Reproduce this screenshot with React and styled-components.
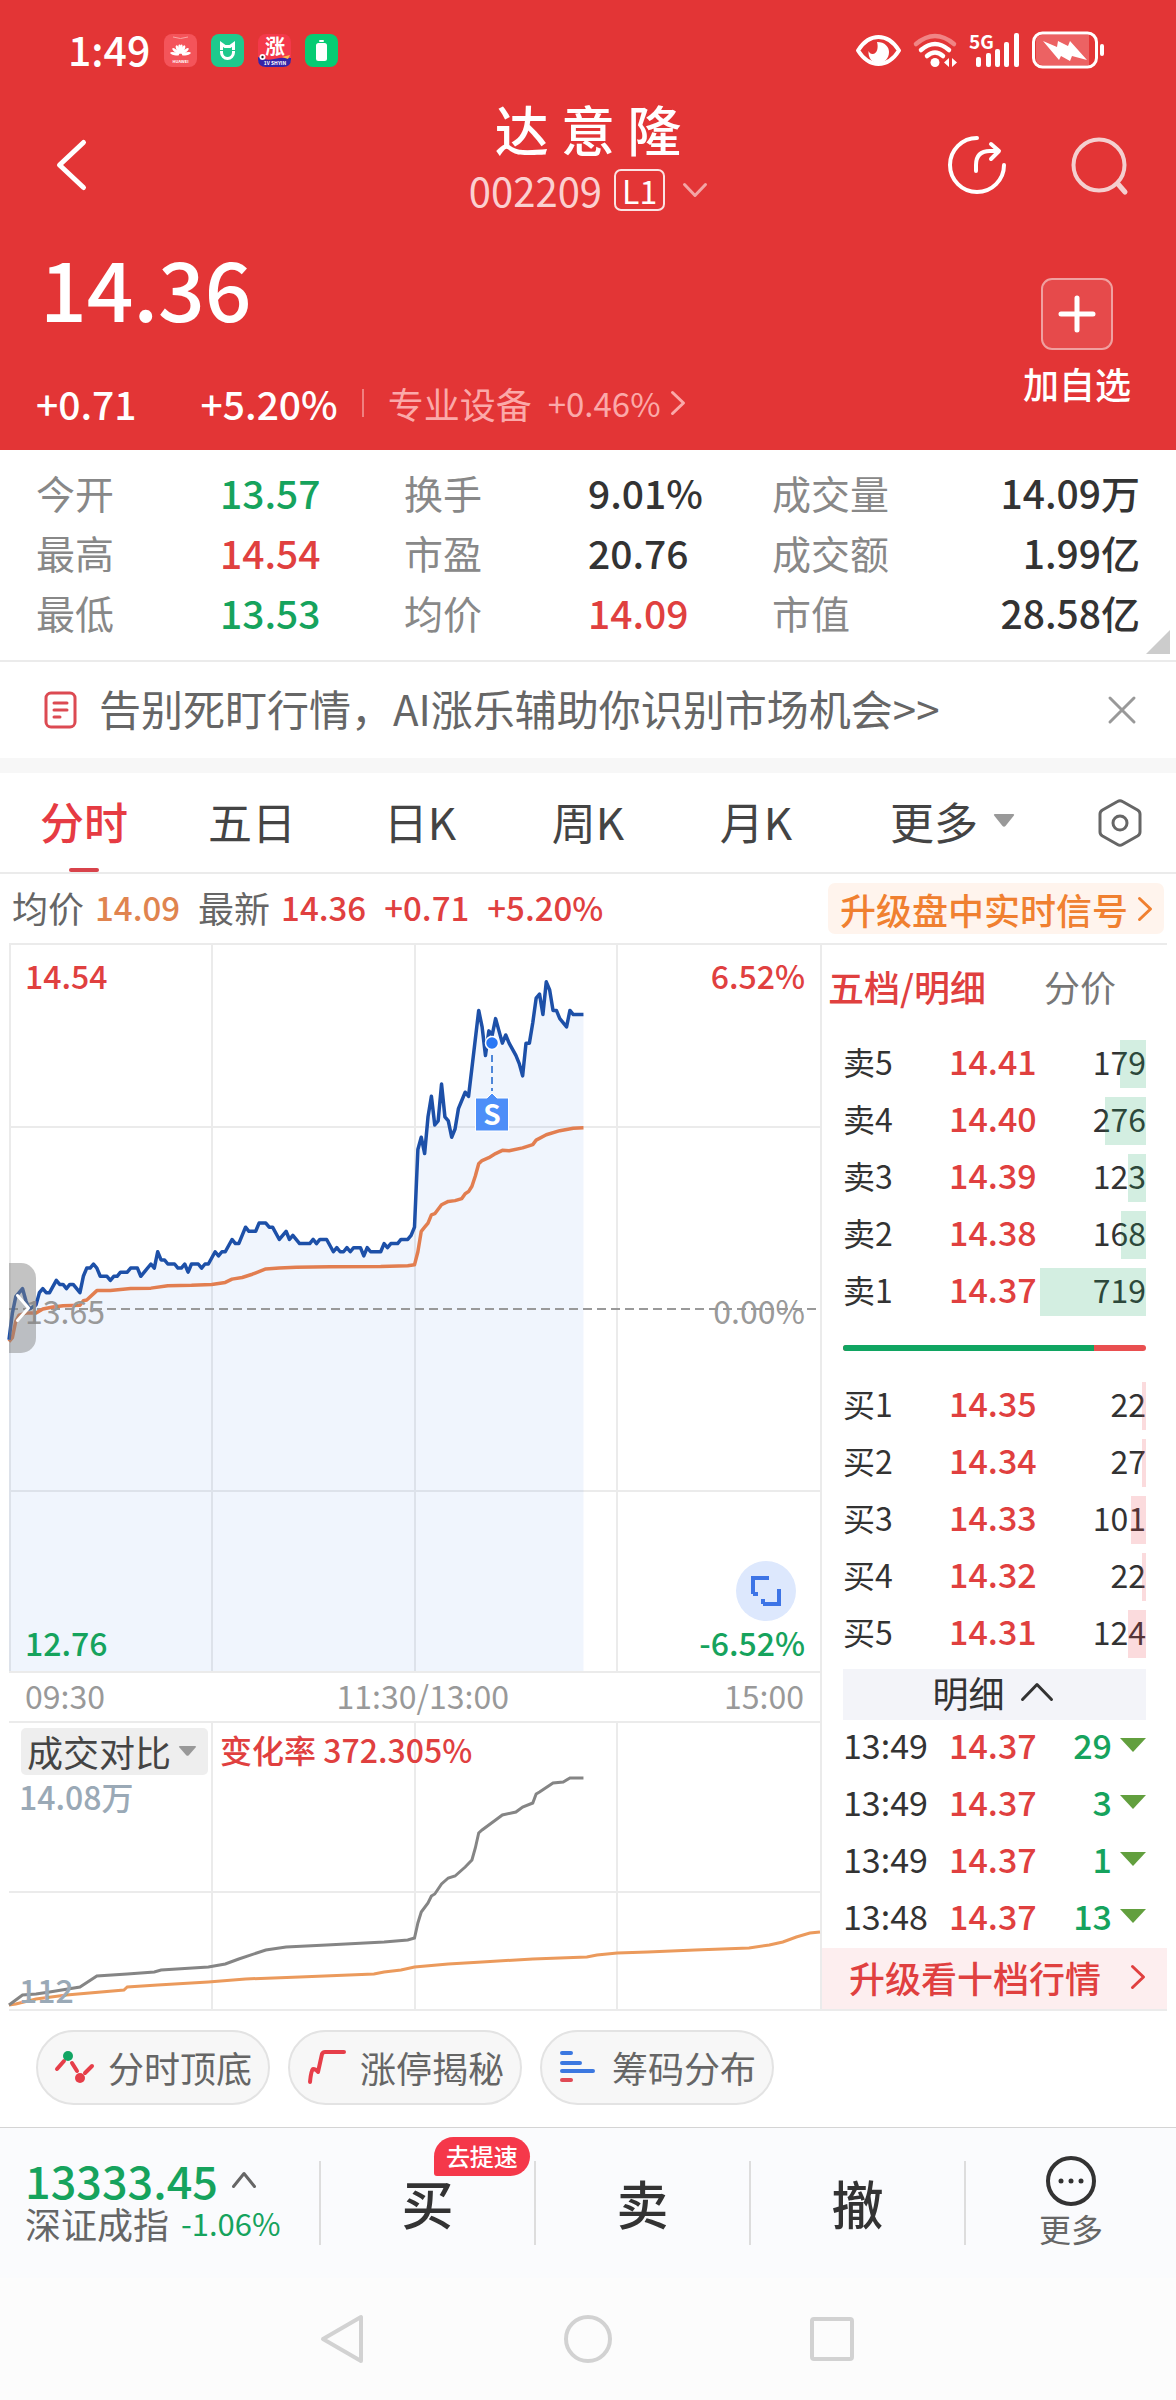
import React from 'react'
import styled, { createGlobalStyle } from 'styled-components'

const red = '#e33536'
const up = '#e0403f'
const down = '#16a35d'
const ink = '#333'
const grey = '#666'
const line = '#ebebeb'

const GlobalStyle = createGlobalStyle`
  * {
    box-sizing: border-box;
  }

  body {
    margin: 0;
    background: #fff;
    color: ${ink};
    font-family: 'Noto Sans CJK SC', 'Noto Sans', sans-serif;
    font-size: 36px;
    line-height: 48px;
  }

  h1, dl, dd, p {
    margin: 0;
  }

  button, select {
    margin: 0;
    padding: 0;
    border: 0;
    background: none;
    color: inherit;
    font: inherit;
  }

  svg {
    display: block;
    flex: none;
    overflow: visible;
  }
`

const Page = styled.div`
  display: flex;
  flex-direction: column;
  min-height: 100vh;
`

/* header */

const Header = styled.header`
  background: ${red};
  color: #fff;
`

const StatusBar = styled.div`
  display: flex;
  align-items: center;
  justify-content: space-between;
  height: 100px;
  padding: 0 71px 0 68px;
`

const StatusGroup = styled.div`
  display: flex;
  align-items: center;
  gap: ${p => p.$gap}px;
`

const Clock = styled.span`
  padding-bottom: 4px;
  font-size: 41px;
  font-weight: 500;
`

const TitleBar = styled.div`
  display: grid;
  grid-template-columns: 1fr auto 1fr;
  align-items: center;
  height: 130px;
  padding: 0 48px;
`

const IconButton = styled.button`
  display: flex;
  align-items: center;
  justify-content: center;
`

const BackSlot = styled.div`
  padding-left: 9px;
`

const Title = styled.div`
  align-self: start;
  text-align: center;
`

const Name = styled.h1`
  font-size: 54px;
  font-weight: 500;
  line-height: 58px;
`

const CodeButton = styled.button`
  display: flex;
  align-items: center;
  height: 64px;
  margin: 0 auto;
  color: #fbd0d0;
  font-size: 40px;
`

const Level = styled.span`
  margin: 0 18px 0 12px;
  padding: 0 6px;
  border: 2px solid #fbe3e3;
  border-radius: 7px;
  color: #fff;
  font-size: 32px;
  line-height: 38px;
`

const Actions = styled.div`
  display: flex;
  justify-content: flex-end;
  gap: 64px;
`

const Quote = styled.section`
  display: flex;
  justify-content: space-between;
  height: 220px;
  padding: 0 45px 0 36px;
`

const Price = styled.p`
  margin-left: 4px;
  font-size: 82px;
  font-weight: 500;
  line-height: 114px;
`

const ChangeRow = styled.div`
  display: flex;
  align-items: center;
  margin-top: 35px;
  font-size: 39px;
  font-weight: 500;
`

const Percent = styled.span`
  margin-left: 64px;
`

const Sector = styled.a`
  display: flex;
  align-items: center;
  gap: 16px;
  margin-left: 24px;
  padding-left: 24px;
  color: #fba9a9;
  font-size: 36px;
  font-weight: 400;
  line-height: 28px;
  text-decoration: none;
  border-left: 2px solid #f08080;
`

const SectorChange = styled.span`
  display: flex;
  align-items: center;
  gap: 10px;
  font-size: 33px;
`

const AddButton = styled.button`
  display: flex;
  flex-direction: column;
  align-items: center;
  align-self: flex-start;
  gap: 13px;
  padding-top: 48px;
  font-weight: 500;
  line-height: 40px;
`

const AddBox = styled.span`
  display: flex;
  align-items: center;
  justify-content: center;
  width: 72px;
  height: 72px;
  border: 2px solid #f0a0a0;
  border-radius: 11px;
  background: #e64a4b;
`

/* stats */

const Stats = styled.dl`
  position: relative;
  display: grid;
  grid-template-columns: repeat(3, 1fr);
  padding: 12px 36px 18px;
  border-bottom: 2px solid ${line};
`

const Stat = styled.div`
  display: flex;
  height: 60px;
  line-height: 60px;
`

const StatLabel = styled.dt`
  width: 50%;
  color: #888;
  font-size: 39px;
`

const StatValue = styled.dd`
  flex: 1;
  color: ${p => p.$color || ink};
  font-size: 39px;
  font-weight: 500;
  text-align: ${p => (p.$end ? 'right' : 'left')};
  white-space: nowrap;
`

const Corner = styled.span`
  position: absolute;
  right: 6px;
  bottom: 6px;
  border-left: 24px solid transparent;
  border-bottom: 24px solid #ccc;
`

const Notice = styled.section`
  display: flex;
  align-items: center;
  height: 111px;
  padding: 0 40px 0 44px;
  border-bottom: 15px solid #f7f7f7;
  color: ${grey};
  font-size: 42px;
`

const NoticeText = styled.a`
  flex: 1;
  margin-left: 21px;
  padding-bottom: 4px;
  color: inherit;
  text-decoration: none;
`

/* tabs */

const Tabs = styled.nav`
  display: grid;
  grid-template-columns: repeat(5, 3fr) 4fr 2fr;
  height: 101px;
  border-bottom: 2px solid ${line};
`

const Tab = styled.button`
  position: relative;
  display: flex;
  align-items: center;
  justify-content: center;
  gap: 16px;
  padding-bottom: 4px;
  color: ${p => (p.$active ? '#e63b43' : '#444')};
  font-size: 44px;
  font-weight: ${p => (p.$active ? 500 : 400)};

  &::after {
    content: '';
    position: absolute;
    bottom: 0;
    width: 30px;
    height: 4px;
    border-radius: 2px;
    background: ${p => (p.$active ? '#d8434b' : 'transparent')};
  }
`

/* chart */

const InfoRow = styled.div`
  display: flex;
  align-items: center;
  justify-content: space-between;
  height: 69px;
  padding: 0 12px;
`

const Figures = styled.div`
  display: flex;
  gap: 18px;
  padding-bottom: 4px;
  color: ${up};
  font-size: 33px;
  font-weight: 500;
`

const Figure = styled.span`
  display: flex;
  gap: 11px;
  color: ${p => p.$color};
`

const FigureLabel = styled.span`
  color: ${grey};
  font-size: 36px;
  font-weight: 400;
`

const SignalButton = styled.button`
  display: flex;
  align-items: center;
  gap: 10px;
  height: 51px;
  padding: 0 12px;
  border-radius: 7px;
  background: #fff4ed;
  color: #f08030;
  font-weight: 500;
`

const Board = styled.main`
  display: grid;
  grid-template-columns: minmax(0, 811fr) minmax(0, 347fr);
  margin: 0 9px;
  border-top: 2px solid ${line};
  border-bottom: 2px solid ${line};
`

const Canvas = styled.div`
  position: relative;

  > svg {
    width: 100%;
  }
`

const ScaleLabel = styled.span`
  position: absolute;
  ${p => (p.$right ? 'right: 15px;' : `left: ${p.$volume ? 10 : 16}px;`)}
  top: ${p => p.$y}px;
  color: ${p => p.$color};
  font-size: 32px;
  font-weight: ${p => (p.$thin ? 400 : 500)};
  line-height: 40px;
`

const DrawerHandle = styled.button`
  position: absolute;
  left: 0;
  top: 318px;
  display: flex;
  align-items: center;
  justify-content: center;
  width: 27px;
  height: 90px;
  border-radius: 0 15px 15px 0;
  background: rgba(130, 130, 130, 0.48);
`

const ExpandButton = styled(IconButton)`
  position: absolute;
  right: 24px;
  bottom: 52px;
  width: 60px;
  height: 60px;
  border-radius: 50%;
  background: #dde8fd;
`

const TimeAxis = styled.div`
  display: grid;
  grid-template-columns: 2fr 2fr 1fr;
  height: 48px;
  padding: 0 16px;
  color: #999;
  font-size: 32px;
  line-height: 44px;
`

const AxisEnd = styled.span`
  text-align: right;
`

const VolumeHead = styled.div`
  position: absolute;
  left: 12px;
  top: 6px;
  display: flex;
  align-items: center;
  gap: 12px;
  color: ${up};
  font-size: 32px;
  font-weight: 500;
  line-height: 44px;
`

const IndicatorPicker = styled.label`
  display: flex;
  align-items: center;
  height: 47px;
  padding: 0 12px 0 6px;
  border-radius: 5px;
  background: #eee;

  select {
    appearance: none;
    margin-right: 7px;
    color: #444;
    font-size: 36px;
    font-weight: 400;
    line-height: 44px;
  }
`

const Rate = styled.span`
  padding-bottom: 4px;
`

/* order book */

const Book = styled.aside`
  display: flex;
  flex-direction: column;
  border-left: 2px solid ${line};
`

const BookTabs = styled.div`
  display: flex;
  align-items: center;
  gap: 58px;
  height: 91px;
  padding: 0 0 10px 6px;
`

const BookTab = styled.button`
  color: ${p => (p.$active ? up : '#777')};
  font-weight: ${p => (p.$active ? 500 : 400)};
`

const BookBody = styled.div`
  padding: 0 21px;
`

const Rows = styled.table`
  width: 100%;
  border-collapse: collapse;
  table-layout: fixed;

  td, th {
    height: 57px;
    padding: 0 0 7px;
    font-size: 34px;
    font-weight: 500;
    text-align: left;
    white-space: nowrap;
  }
`

const LevelName = styled.th`
  && {
    width: 35%;
    font-size: ${p => (p.$small ? 32 : 34)}px;
    font-weight: 400;
  }
`

const PriceCell = styled.td`
  width: 29%;
  color: ${up};
`

const SizeCell = styled.td`
  && {
    position: relative;
    font-size: 32px;
    font-weight: 400;
    text-align: right;
  }
`

const SizeBar = styled.span`
  position: absolute;
  right: 0;
  top: 4px;
  height: 48px;
  background: ${p => (p.$side === 'ask' ? 'rgba(22, 163, 93, 0.19)' : 'rgba(232, 64, 72, 0.19)')};
`

const TradeSize = styled.span`
  display: flex;
  align-items: center;
  justify-content: flex-end;
  gap: 8px;
  color: ${down};
`

const Ratio = styled.div`
  display: flex;
  height: 6px;
  margin: 24px 0 27px;
  border-radius: 3px;
  background: #e94f50;
  overflow: hidden;
`

const RatioFill = styled.span`
  background: #10a562;
`

const DetailToggle = styled.button`
  display: flex;
  align-items: center;
  justify-content: center;
  gap: 16px;
  width: 100%;
  height: 51px;
  margin-top: 6px;
  padding: 0 4px 6px 0;
  background: #f3f4f9;
`

const DepthLink = styled.a`
  display: flex;
  flex: 1;
  align-items: center;
  justify-content: space-between;
  min-height: 61px;
  padding: 0 22px 4px 27px;
  background: #fdeeef;
  color: ${up};
  font-weight: 500;
  text-decoration: none;
`

/* bottom */

const Chips = styled.div`
  display: flex;
  gap: 18px;
  padding: 19px 36px 22px;
`

const Chip = styled.button`
  display: flex;
  align-items: center;
  justify-content: center;
  gap: 14px;
  width: 234px;
  height: 75px;
  padding-bottom: 2px;
  border: 2px solid #e3e3e3;
  border-radius: 38px;
  background: #f7f7f7;
  color: ${grey};
`

const TradeBar = styled.footer`
  display: grid;
  grid-template-columns: 319fr repeat(3, 215fr) 212fr;
  grid-auto-rows: 84px;
  height: 151px;
  padding: 33px 0;
  border-top: 1px solid #d4d4d4;
  background: #fafbfd;
`

const Index = styled.button`
  padding-left: 25px;
  color: ${down};
  text-align: left;
`

const IndexValue = styled.span`
  display: flex;
  align-items: center;
  gap: 14px;
  font-size: 45px;
  font-weight: 500;
  line-height: 38px;
`

const IndexLine = styled.span`
  display: flex;
  align-items: center;
  gap: 12px;
  margin-top: 2px;
  font-size: 31px;
  line-height: 44px;
`

const IndexName = styled.span`
  color: ${grey};
  font-size: 36px;
`

const TradeButton = styled.button`
  position: relative;
  display: flex;
  flex-direction: column;
  align-items: center;
  justify-content: center;
  border-left: 2px solid #ddd;
  font-size: 52px;
  font-weight: 500;
`

const MoreLabel = styled.span`
  color: ${grey};
  font-size: 32px;
  font-weight: 400;
  line-height: 44px;
`

const Badge = styled.span`
  position: absolute;
  left: 53%;
  top: -24px;
  height: 39px;
  padding: 0 12px;
  border-radius: 20px 20px 20px 3px;
  background: #f5384a;
  color: #fff;
  font-size: 24px;
  line-height: 37px;
`

const SystemNav = styled.nav`
  display: flex;
  flex: 1;
  align-items: center;
  justify-content: center;
  gap: 196px;
  min-height: 122px;
  background: #fcfcfc;
`

/* data */

const stats = [
  ['今开', '13.57', down], ['换手', '9.01%'], ['成交量', '14.09万'],
  ['最高', '14.54', up], ['市盈', '20.76'], ['成交额', '1.99亿'],
  ['最低', '13.53', down], ['均价', '14.09', up], ['市值', '28.58亿']
]

const asks = [
  ['卖5', '14.41', 179], ['卖4', '14.40', 276], ['卖3', '14.39', 123],
  ['卖2', '14.38', 168], ['卖1', '14.37', 719]
]

const bids = [
  ['买1', '14.35', 22], ['买2', '14.34', 27], ['买3', '14.33', 101],
  ['买4', '14.32', 22], ['买5', '14.31', 124]
]

const trades = [
  ['13:49', '14.37', 29], ['13:49', '14.37', 3],
  ['13:49', '14.37', 1], ['13:48', '14.37', 13]
]

// [minute of the session, cents above the previous close]
const priceData = [
  [0, -7.5], [1, -1], [2, 3], [4, 5], [5, 2], [6, 0], [8, 1], [9, 4], [10, 5], [11, 4], [12, 4],
  [14, 7], [15, 6], [16, 6], [17, 5], [18, 6], [19, 6], [21, 4], [22, 8], [23, 10], [24, 10],
  [25, 11], [26, 10], [27, 8], [29, 8], [30, 7], [31, 8], [32, 8], [33, 9], [35, 9], [36, 10],
  [38, 10], [39, 8], [42, 11], [43, 10], [44, 14], [45, 12], [46, 12], [47, 11], [49, 11],
  [50, 10], [51, 10], [52, 11], [53, 9], [54, 11], [56, 11], [57, 10], [58, 11], [59, 11],
  [61, 14], [62, 13], [63, 14], [64, 14], [66, 17], [67, 16], [68, 16], [70, 20], [71, 19],
  [73, 19], [74, 21], [76, 21], [77, 20], [78, 20], [80, 17], [82, 19], [83, 17], [84, 18],
  [86, 16], [89, 16], [90, 17], [91, 16], [92, 17], [94, 17], [96, 14], [97, 15], [98, 14],
  [99, 14], [100, 15], [101, 14], [102, 15], [104, 15], [105, 13], [106, 15], [107, 14],
  [110, 14], [111, 16], [112, 15], [113, 16], [115, 16], [116, 17], [118, 17], [119, 18],
  [120, 20], [121, 39], [122, 42], [123, 38], [124, 47], [125, 52], [126, 45], [127, 46],
  [128, 55], [129, 47], [130, 46], [131, 42], [132, 44], [133, 49], [135, 53], [136, 52],
  [137, 59], [139, 73], [140, 69], [141, 62], [142, 68], [143, 67], [144, 71], [146, 65],
  [147, 67], [148, 65], [150, 62], [151, 60], [152, 57], [153, 65], [154, 65], [155, 70],
  [156, 76], [157, 77], [158, 72], [159, 80], [160, 78], [161, 73], [162, 73], [163, 71],
  [165, 69], [166, 73], [167, 72], [170, 72]
]

const averageData = [
  [0, -8], [1, -7], [2, -3], [3, -1.5], [5, -1], [8, -1], [10, 0], [13, 0.5], [16, 0.8],
  [21, 0.9], [22, 2], [23, 2.2], [26, 4.5], [30, 4.5], [36, 5], [42, 5.1], [47, 5.7], [54, 5.8],
  [60, 6], [64, 6.5], [66, 7.3], [69, 7.7], [72, 8.5], [76, 9.8], [80, 10], [85, 10.2],
  [95, 10.3], [110, 10.4], [118, 10.6], [120, 10.8], [121, 14], [122, 19], [123, 20],
  [124, 21], [125, 23], [126, 23.3], [128, 25.5], [130, 26.3], [132, 26.5], [134, 27],
  [135, 28.2], [136, 28.7], [137, 30], [138, 32.5], [139, 35.5], [140, 36.3], [142, 37],
  [144, 38], [146, 38.8], [148, 38.7], [152, 39.4], [155, 40.2], [156, 41.3], [159, 42.6],
  [163, 43.6], [167, 44.2], [170, 44.3]
]

// [minute of the session, height in the volume pane]
const volumeToday = [
  [0, 284], [4, 274], [8, 273], [12, 271], [21, 266], [26, 255], [35, 253], [43, 251], [45, 249],
  [59, 246], [64, 243], [68, 238], [76, 229], [82, 226], [94, 224], [111, 221], [118, 219],
  [120, 217], [121, 202], [122, 191], [124, 182], [125, 175], [126, 173], [128, 163],
  [130, 157], [132, 155], [135, 146], [137, 139], [138, 127], [139, 112], [140, 109],
  [144, 99], [146, 94], [150, 91], [152, 86], [155, 82], [156, 73], [157, 71], [161, 62],
  [164, 61], [166, 57], [170, 57]
]

const volumeBefore = [
  [0, 284], [2, 283], [8, 278], [17, 274], [34, 269], [35, 266], [44, 264], [59, 261], [70, 258],
  [86, 256], [108, 253], [111, 251], [116, 249], [120, 246], [130, 243], [140, 241], [155, 238],
  [171, 236], [174, 234], [180, 232], [189, 231], [203, 229], [219, 227], [225, 224],
  [229, 221], [233, 216], [237, 212], [240, 211]
]

const minute = m => m * 811 / 240
const cents = c => 364 - c * 4.09
const toPoints = (data, y = v => v) => data.map(([m, v]) => `${minute(m)},${y(v)}`).join(' ')

/* icons */

const Chevron = ({ d = 'right', w = 14, h = 24, color = 'currentColor', stroke = 3 }) => {
  const s = stroke / 2
  const points = {
    left: `${w - s},${s} ${s},${h / 2} ${w - s},${h - s}`,
    right: `${s},${s} ${w - s},${h / 2} ${s},${h - s}`,
    down: `${s},${s} ${w / 2},${h - s} ${w - s},${s}`,
    up: `${s},${h - s} ${w / 2},${s} ${w - s},${h - s}`
  }[d]
  return (
    <svg width={w} height={h} fill="none" stroke={color} strokeWidth={stroke} strokeLinecap="round" strokeLinejoin="round">
      <polyline points={points} />
    </svg>
  )
}

const Caret = ({ w = 20, h = 13, color = '#999' }) => (
  <svg width={w} height={h} viewBox="0 0 20 13" preserveAspectRatio="none">
    <path d="M1 0h18q2 0 .5 2l-8 10q-1.500 1.500-3 0l-8-10q-1.500-2 .5-2z" fill={color} />
  </svg>
)

const AppIcons = () => (
  <>
    <svg width="33" height="33" viewBox="0 0 33 33">
      <rect width="33" height="33" rx="8" fill="#f4545a" />
      <path d="M9 3q7.500 3 15 0" fill="none" stroke="#f9a5a5" />
      <g fill="#fff">
        {[-78, -50, -24, -6, 6, 24, 50, 78].map(a => (
          <ellipse key={a} cx="16.500" cy="15" rx="1.500" ry="4.500" transform={`rotate(${a} 16.500 21)`} />
        ))}
      </g>
      <text x="16.500" y="29" fontSize="4" fontWeight="700" textAnchor="middle" fill="#fff">HUAWEI</text>
    </svg>
    <svg width="33" height="33" viewBox="0 0 33 33">
      <rect width="33" height="33" rx="8" fill="#1fc98d" />
      <path d="M10.500 16V10l3.500 2.500h5L22.500 10v6M10.500 17v1.500a6 6 0 0 0 12 0V17" fill="none" stroke="#fff" strokeWidth="3" />
    </svg>
    <svg width="33" height="33" viewBox="0 0 33 33">
      <rect width="33" height="33" rx="8" fill="#f4394a" />
      <path d="M0 23q8 4 16 2t17-1v1q0 8-8 8H8q-8 0-8-8z" fill="#3524a8" />
      <text x="17" y="20" fontSize="20" fontWeight="700" textAnchor="middle" fill="#fff">涨</text>
      <circle cx="4.500" cy="23" r="3" fill="#fff" />
      <circle cx="4.500" cy="23" r="1.200" fill="#222" />
      <path d="M24 23l8-2-2 4z" fill="#ffb84d" />
      <text x="17" y="31" fontSize="5" fontWeight="700" textAnchor="middle" fill="#fff">1V SHYIN</text>
    </svg>
    <svg width="33" height="33" viewBox="0 0 33 33">
      <rect width="33" height="33" rx="8" fill="#06cc73" />
      <rect x="11" y="9" width="11" height="18" rx="2.500" fill="#fff" />
      <rect x="14" y="6" width="5" height="2" rx="1" fill="#fff" />
    </svg>
  </>
)

const StatusIcons = () => (
  <>
    <svg width="45" height="33" viewBox="0 0 45 33">
      <path d="M2 16.500C8 7 15 3 22.500 3S37 7 43 16.500C37 26 30 30 22.500 30S8 26 2 16.500z" fill="none" stroke="#fff" strokeWidth="4" strokeLinejoin="round" />
      <path d="M21 8c8 0 12 5 12 10 0 6-4 11-10.500 11S12 24 12.500 17c1 2 2 3 4 3 5 0 6-7 4.500-12z" fill="#fff" />
    </svg>
    <svg width="44" height="34" viewBox="0 0 44 34" fill="none" strokeLinecap="round" strokeWidth="4.500">
      <path d="M3 11q19-16 38 0" stroke="#f08585" />
      <path d="M8 17q14-12 28 0M14 23q8-7 16 0" stroke="#fff" />
      <circle cx="22" cy="29.500" r="4.500" fill="#fff" />
      <path d="M36 25v9l-5-4.500zM39 25v9l5-4.500z" fill="#fff" />
    </svg>
    <svg width="51" height="34" viewBox="0 0 51 34" fill="#fff">
      <text x="0" y="16" fontSize="19" fontWeight="700">5G</text>
      <rect x="7" y="24" width="5" height="10" rx="2" />
      <rect x="17" y="20" width="5" height="14" rx="2" />
      <rect x="26" y="16" width="5" height="18" rx="2" />
      <rect x="35" y="9" width="5" height="25" rx="2" />
      <rect x="45" y="0" width="5" height="34" rx="2" />
    </svg>
    <svg width="73" height="38" viewBox="0 0 73 38">
      <rect x="1.500" y="2" width="63" height="34" rx="9" fill="#e33536" stroke="#fff" strokeWidth="3" />
      <path d="M10 4h47v30H10q-6 0-6-7V11q0-7 6-7z" fill="#ec6263" />
      <path d="M11 10l14 6 1-6 10 5 2-5 17 19-15-4-2 5-9-5-2 4z" fill="#fff" />
      <rect x="68" y="13" width="4" height="12" rx="2" fill="#fff" />
    </svg>
  </>
)

const ShareIcon = () => (
  <svg width="58" height="60" viewBox="0 0 58 60" fill="none" stroke="#fff" strokeWidth="4" strokeLinecap="round" strokeLinejoin="round">
    <path d="M29 3a27 27 0 1 0 27 27" />
    <path d="M28 36v-6q0-14 14-14h8M43 9l8 7-8 8" />
  </svg>
)

const SearchIcon = () => (
  <svg width="58" height="60" viewBox="0 0 58 60" fill="none" stroke="#f4cfcf" strokeWidth="4" strokeLinecap="round">
    <circle cx="29" cy="30" r="25.500" />
    <path d="M48 49l7 8" strokeWidth="5" />
  </svg>
)

const SettingsIcon = () => (
  <svg width="44" height="48" viewBox="0 0 44 48" fill="none" stroke={grey} strokeWidth="3" strokeLinejoin="round">
    <path d="M19.500 2.500q2.500-1.500 5 0l15 8.500q2.500 1.500 2.500 4v18q0 2.500-2.500 4l-15 8.500q-2.500 1.500-5 0l-15-8.500Q2 35.500 2 33V15q0-2.500 2.500-4z" />
    <circle cx="22" cy="24" r="7" />
  </svg>
)

const NoteIcon = () => (
  <svg width="34" height="38" viewBox="0 0 34 38" fill="none" stroke="#dc4a52" strokeWidth="3" strokeLinecap="round">
    <rect x="2" y="2" width="29" height="34" rx="5" />
    <path d="M10 12h13M10 19h13M10 26h6" />
  </svg>
)

const chipIcons = {
  turn: (
    <svg width="40" height="36" viewBox="0 0 40 36" stroke="#e63e49" strokeWidth="4" strokeLinecap="round">
      <path d="M3 20l7-8M18 14l5 8M31 24l7-7" />
      <circle cx="14" cy="7" r="5" fill="#12a563" stroke="none" />
      <circle cx="26" cy="29" r="5" fill="#e63e49" stroke="none" />
    </svg>
  ),
  limit: (
    <svg width="40" height="36" viewBox="0 0 40 36" fill="none" stroke="#e63e49" strokeWidth="4" strokeLinecap="round" strokeLinejoin="round">
      <path d="M4 33q1-11 3-13 3 0 5 3l4-18q1-2 3-2h19" />
    </svg>
  ),
  chips: (
    <svg width="40" height="36" viewBox="0 0 40 36" stroke="#3c78e0" strokeWidth="4" strokeLinecap="round">
      <path d="M4 4h9M4 14h18M4 22h31" />
      <path d="M4 31h9" stroke="#e04a55" />
    </svg>
  )
}

const PriceChart = () => (
  <Canvas>
    <svg height="728" viewBox="0 0 811 728" preserveAspectRatio="none" fill="none">
      <path d="M1 0V728M203 0V728M406 0V728M608 0V728M0 182H811M0 546H811M0 727H811" stroke={line} strokeWidth="2" />
      <polygon points={`0,726 ${toPoints(priceData, cents)} ${minute(170)},726`} fill="#3f7fe8" fillOpacity="0.08" />
      <path d="M0 364H811" stroke="#999" strokeWidth="2" strokeDasharray="9 5" />
      <polyline points={toPoints(averageData, cents)} stroke="#e27e50" strokeWidth="3.500" strokeLinejoin="round" />
      <polyline points={toPoints(priceData, cents)} stroke="#1d50a8" strokeWidth="3.500" strokeLinejoin="round" />
      <path d="M483 110V146" stroke="#4d86d8" strokeWidth="2" strokeDasharray="7 4" />
      <circle cx="483" cy="98" r="6.500" fill="#2a78f5" stroke="#fff" strokeWidth="1.500" />
      <path d="M466.500 153h11.500l5-5 5 5h11.500v33h-33z" fill="#4d8ef8" stroke="#fff" />
      <text x="483" y="180" fontSize="28" fontWeight="700" textAnchor="middle" fill="#fff">S</text>
    </svg>
    <ScaleLabel $y={10} $color={up}>14.54</ScaleLabel>
    <ScaleLabel $y={10} $color={up} $right>6.52%</ScaleLabel>
    <ScaleLabel $y={345} $color="#999" $thin>13.65</ScaleLabel>
    <ScaleLabel $y={345} $color="#999" $thin $right>0.00%</ScaleLabel>
    <ScaleLabel $y={677} $color={down}>12.76</ScaleLabel>
    <ScaleLabel $y={677} $color={down} $right>-6.52%</ScaleLabel>
    <DrawerHandle aria-label="展开">
      <Chevron w={14} h={28} color="#fff" />
    </DrawerHandle>
    <ExpandButton aria-label="全屏">
      <svg width="30" height="30" fill="none" stroke="#3d74e6" strokeWidth="4">
        <path d="M2 18V2H18M28 13V28H12M2 18h5M12 28v-5" />
      </svg>
    </ExpandButton>
  </Canvas>
)

const VolumeChart = () => (
  <Canvas>
    <svg height="288" viewBox="0 0 811 288" preserveAspectRatio="none" fill="none">
      <path d="M0 1H811M203 0V288M406 0V288M608 0V288M0 171H811" stroke={line} strokeWidth="2" />
      <polyline points={toPoints(volumeBefore)} stroke="#eb9a5c" strokeWidth="3" />
      <polyline points={toPoints(volumeToday)} stroke="#858585" strokeWidth="3" />
    </svg>
    <VolumeHead>
      <IndicatorPicker>
        <select aria-label="指标">
          <option>成交对比</option>
        </select>
        <Caret w={17} h={10} />
      </IndicatorPicker>
      <Rate>变化率 372.305%</Rate>
    </VolumeHead>
    <ScaleLabel $y={55} $color="#9aa9b6" $volume>14.08万</ScaleLabel>
    <ScaleLabel $y={248} $color="#9aa9b6" $volume>112</ScaleLabel>
  </Canvas>
)

const Levels = ({ side, rows }) => (
  <Rows>
    <tbody>
      {rows.map(([name, price, size]) => (
        <tr key={name}>
          <LevelName scope="row" $small>{name}</LevelName>
          <PriceCell>{price}</PriceCell>
          <SizeCell>
            {size}
            <SizeBar $side={side} style={{ width: Math.max(4, Math.round(size * 0.148)) }} />
          </SizeCell>
        </tr>
      ))}
    </tbody>
  </Rows>
)

const OrderBook = () => (
  <Book>
    <BookTabs>
      <BookTab $active>五档/明细</BookTab>
      <BookTab>分价</BookTab>
    </BookTabs>
    <BookBody>
      <Levels side="ask" rows={asks} />
      <Ratio>
        <RatioFill style={{ width: '83%' }} />
      </Ratio>
      <Levels side="bid" rows={bids} />
      <DetailToggle>
        明细
        <Chevron d="up" w={32} h={18} />
      </DetailToggle>
      <Rows>
        <tbody>
          {trades.map(([time, price, size], i) => (
            <tr key={i}>
              <LevelName scope="row">{time}</LevelName>
              <PriceCell>{price}</PriceCell>
              <td>
                <TradeSize>
                  {size}
                  <svg width="26" height="14"><path d="M0 0h26L13 14z" fill="#629f3e" /></svg>
                </TradeSize>
              </td>
            </tr>
          ))}
        </tbody>
      </Rows>
    </BookBody>
    <DepthLink href="#depth">
      升级看十档行情
      <Chevron />
    </DepthLink>
  </Book>
)

export default () => (
  <Page>
    <GlobalStyle />
    <Header>
      <StatusBar>
        <StatusGroup $gap={14}>
          <Clock>1:49</Clock>
          <AppIcons />
        </StatusGroup>
        <StatusGroup $gap={12}>
          <StatusIcons />
        </StatusGroup>
      </StatusBar>
      <TitleBar>
        <BackSlot>
          <IconButton aria-label="返回">
            <Chevron d="left" w={29} h={50} stroke={5} />
          </IconButton>
        </BackSlot>
        <Title>
          <Name>达 意 隆</Name>
          <CodeButton>
            002209
            <Level>L1</Level>
            <Chevron d="down" w={24} h={14} color="#f3a5a5" />
          </CodeButton>
        </Title>
        <Actions>
          <IconButton aria-label="分享"><ShareIcon /></IconButton>
          <IconButton aria-label="搜索"><SearchIcon /></IconButton>
        </Actions>
      </TitleBar>
      <Quote>
        <div>
          <Price>14.36</Price>
          <ChangeRow>
            <span>+0.71</span>
            <Percent>+5.20%</Percent>
            <Sector href="#sector">
              专业设备
              <SectorChange>
                +0.46%
                <Chevron />
              </SectorChange>
            </Sector>
          </ChangeRow>
        </div>
        <AddButton>
          <AddBox>
            <svg width="38" height="38" stroke="#fff" strokeWidth="5" strokeLinecap="round">
              <path d="M19 3V35M3 19H35" />
            </svg>
          </AddBox>
          加自选
        </AddButton>
      </Quote>
    </Header>
    <Stats>
      {stats.map(([label, value, color], i) => (
        <Stat key={label + i}>
          <StatLabel>{label}</StatLabel>
          <StatValue $color={color} $end={i % 3 === 2}>{value}</StatValue>
        </Stat>
      ))}
      <Corner />
    </Stats>
    <Notice>
      <NoteIcon />
      <NoticeText href="#notice">告别死盯行情，AI涨乐辅助你识别市场机会&gt;&gt;</NoticeText>
      <IconButton aria-label="关闭">
        <svg width="28" height="28" stroke="#999" strokeWidth="3" strokeLinecap="round">
          <path d="M2 2L26 26M26 2L2 26" />
        </svg>
      </IconButton>
    </Notice>
    <Tabs>
      <Tab $active>分时</Tab>
      {['五日', '日K', '周K', '月K'].map(t => <Tab key={t}>{t}</Tab>)}
      <Tab>更多<Caret /></Tab>
      <IconButton aria-label="设置"><SettingsIcon /></IconButton>
    </Tabs>
    <InfoRow>
      <Figures>
        <Figure $color="#e0844f"><FigureLabel>均价</FigureLabel>14.09</Figure>
        <Figure><FigureLabel>最新</FigureLabel>14.36</Figure>
        <Figure>+0.71</Figure>
        <Figure>+5.20%</Figure>
      </Figures>
      <SignalButton>
        升级盘中实时信号
        <Chevron />
      </SignalButton>
    </InfoRow>
    <Board>
      <div>
        <PriceChart />
        <TimeAxis>
          <span>09:30</span>
          <span>11:30/13:00</span>
          <AxisEnd>15:00</AxisEnd>
        </TimeAxis>
        <VolumeChart />
      </div>
      <OrderBook />
    </Board>
    <Chips>
      <Chip>{chipIcons.turn}分时顶底</Chip>
      <Chip>{chipIcons.limit}涨停揭秘</Chip>
      <Chip>{chipIcons.chips}筹码分布</Chip>
    </Chips>
    <TradeBar>
      <Index>
        <IndexValue>
          13333.45
          <Chevron d="up" w={24} h={16} color={grey} />
        </IndexValue>
        <IndexLine>
          <IndexName>深证成指</IndexName>
          -1.06%
        </IndexLine>
      </Index>
      <TradeButton>买<Badge>去提速</Badge></TradeButton>
      <TradeButton>卖</TradeButton>
      <TradeButton>撤</TradeButton>
      <TradeButton>
        <svg width="50" height="50" viewBox="0 0 50 50">
          <circle cx="25" cy="25" r="23" fill="none" stroke={ink} strokeWidth="4" />
          <g fill={ink}>
            <circle cx="15" cy="25" r="2.500" />
            <circle cx="25" cy="25" r="2.500" />
            <circle cx="35" cy="25" r="2.500" />
          </g>
        </svg>
        <MoreLabel>更多</MoreLabel>
      </TradeButton>
    </TradeBar>
    <SystemNav>
      <IconButton aria-label="后退">
        <svg width="48" height="48" fill="none" stroke="#d2d2d2" strokeWidth="4" strokeLinejoin="round">
          <path d="M3 24L41 2V46z" />
        </svg>
      </IconButton>
      <IconButton aria-label="主页">
        <svg width="48" height="48" fill="none" stroke="#d2d2d2" strokeWidth="4">
          <circle cx="24" cy="24" r="22" />
        </svg>
      </IconButton>
      <IconButton aria-label="最近任务">
        <svg width="48" height="48" fill="none" stroke="#d2d2d2" strokeWidth="4">
          <rect x="4" y="4" width="40" height="40" rx="2" />
        </svg>
      </IconButton>
    </SystemNav>
  </Page>
)
